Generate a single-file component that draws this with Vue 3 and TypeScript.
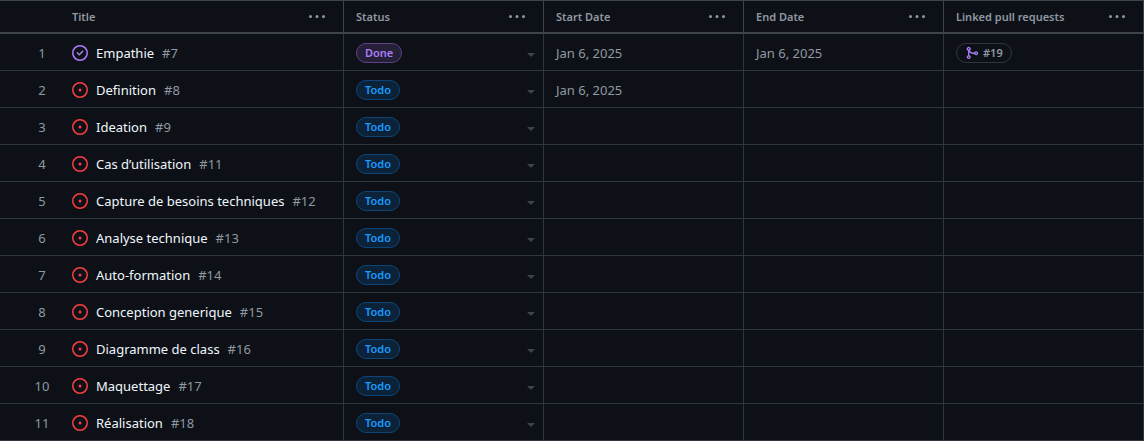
<script setup lang="ts">
interface PullRequest {
  number: number
}

interface Item {
  title: string
  issue: number
  status: 'Todo' | 'Done'
  start?: string
  end?: string
  pull?: PullRequest
}

const columns: string[] = ['Title', 'Status', 'Start Date', 'End Date', 'Linked pull requests']

const items: Item[] = [
  { title: 'Empathie', issue: 7, status: 'Done', start: 'Jan 6, 2025', end: 'Jan 6, 2025', pull: { number: 19 } },
  { title: 'Definition', issue: 8, status: 'Todo', start: 'Jan 6, 2025' },
  { title: 'Ideation', issue: 9, status: 'Todo' },
  { title: 'Cas d’utilisation', issue: 11, status: 'Todo' },
  { title: 'Capture de besoins techniques', issue: 12, status: 'Todo' },
  { title: 'Analyse technique', issue: 13, status: 'Todo' },
  { title: 'Auto-formation', issue: 14, status: 'Todo' },
  { title: 'Conception generique', issue: 15, status: 'Todo' },
  { title: 'Diagramme de class', issue: 16, status: 'Todo' },
  { title: 'Maquettage', issue: 17, status: 'Todo' },
  { title: 'Réalisation', issue: 18, status: 'Todo' },
]
</script>

<template>
  <table class="grid">
    <colgroup>
      <col class="col-index" />
      <col />
      <col class="col-field" span="4" />
    </colgroup>
    <thead>
      <tr>
        <th
          v-for="(name, i) in columns"
          :key="name"
          scope="col"
          :colspan="i === 0 ? 2 : 1"
          :class="{ 'title-head': i === 0 }"
        >
          <div class="head">
            <span>{{ name }}</span>
            <button type="button" class="icon-button" :aria-label="`${name} column options`">
              <svg width="16" height="16" viewBox="0 0 16 16" aria-hidden="true">
                <path d="M8 9a1.5 1.5 0 1 0 0-3 1.5 1.5 0 0 0 0 3ZM1.5 9a1.5 1.5 0 1 0 0-3 1.5 1.5 0 0 0 0 3Zm13 0a1.5 1.5 0 1 0 0-3 1.5 1.5 0 0 0 0 3Z" />
              </svg>
            </button>
          </div>
        </th>
      </tr>
    </thead>
    <tbody>
      <tr v-for="(item, i) in items" :key="item.issue">
        <td class="index">{{ i + 1 }}</td>
        <td>
          <div class="title">
            <svg v-if="item.status === 'Done'" class="closed" width="16" height="16" viewBox="0 0 16 16" aria-hidden="true">
              <path d="M11.28 6.78a.75.75 0 0 0-1.06-1.06L7.25 8.69 5.78 7.22a.75.75 0 0 0-1.06 1.06l2 2a.75.75 0 0 0 1.06 0l3.5-3.5Z" />
              <path d="M16 8A8 8 0 1 1 0 8a8 8 0 0 1 16 0Zm-1.5 0a6.5 6.5 0 1 0-13 0 6.5 6.5 0 0 0 13 0Z" />
            </svg>
            <svg v-else class="open" width="16" height="16" viewBox="0 0 16 16" aria-hidden="true">
              <path d="M8 9.5a1.5 1.5 0 1 0 0-3 1.5 1.5 0 0 0 0 3Z" />
              <path d="M8 0a8 8 0 1 1 0 16A8 8 0 0 1 8 0ZM1.5 8a6.5 6.5 0 1 0 13 0 6.5 6.5 0 0 0-13 0Z" />
            </svg>
            <a :href="`#issue-${item.issue}`">{{ item.title }}</a>
            <span class="number">#{{ item.issue }}</span>
          </div>
        </td>
        <td class="field">
          <div class="status">
            <span class="pill" :class="item.status.toLowerCase()">{{ item.status }}</span>
            <button type="button" class="icon-button caret" :aria-label="`Change status of ${item.title}`">
              <svg width="16" height="16" viewBox="0 0 16 16" aria-hidden="true">
                <path d="m4.427 7.427 3.396 3.396a.25.25 0 0 0 .354 0l3.396-3.396A.25.25 0 0 0 11.396 7H4.604a.25.25 0 0 0-.177.427Z" />
              </svg>
            </button>
          </div>
        </td>
        <td class="field">{{ item.start }}</td>
        <td class="field">{{ item.end }}</td>
        <td class="field">
          <a v-if="item.pull" class="pill pull" :href="`#pull-${item.pull.number}`">
            <svg width="14" height="14" viewBox="0 0 16 16" aria-hidden="true">
              <path d="M5.45 5.154A4.25 4.25 0 0 0 9.25 7.5h1.378a2.251 2.251 0 1 1 0 1.5H9.25A5.734 5.734 0 0 1 5 7.123v3.505a2.25 2.25 0 1 1-1.5 0V5.372a2.25 2.25 0 1 1 1.95-.218ZM4.25 13.5a.75.75 0 1 0 0-1.5.75.75 0 0 0 0 1.5Zm8.5-4.5a.75.75 0 1 0 0-1.5.75.75 0 0 0 0 1.5ZM5 3.25a.75.75 0 1 0 0 .005V3.25Z" />
            </svg>
            #{{ item.pull.number }}
          </a>
        </td>
      </tr>
    </tbody>
  </table>
</template>

<style>
body {
  margin: 0;
  background: #0d1117;
}
</style>

<style scoped>
.grid {
  width: 100%;
  table-layout: fixed;
  border-collapse: separate;
  border-spacing: 0;
  border-top: 1px solid #3d444d;
  color: #9198a1;
  font: 400 13px/20px "Noto Sans", sans-serif;
}

.col-index {
  width: 60px;
}

.col-field {
  width: 200px;
}

th {
  padding: 0 18px 0 12px;
  border-right: 1px solid #3d444d;
  border-bottom: 2px solid #3d444d;
  font-size: 11px;
  font-weight: 600;
  text-align: left;
}

.title-head {
  padding-left: 72px;
}

.head {
  display: flex;
  align-items: center;
  justify-content: space-between;
  height: 31px;
  white-space: nowrap;
}

td {
  padding: 9px 12px 7px;
  border-right: 1px solid #30363d;
  border-bottom: 1px solid #30363d;
  white-space: nowrap;
}

.index {
  padding-right: 0;
  padding-left: 24px;
  border-right: 0;
  text-align: center;
}

.title {
  display: flex;
  align-items: center;
  gap: 8px;
}

.title a {
  color: #f0f6fc;
  text-decoration: none;
}

.number {
  color: #9198a1;
}

svg {
  display: block;
  flex: none;
  fill: currentColor;
}

.closed {
  color: #ab7df8;
}

.open {
  color: #f93e3e;
}

.field {
  padding-right: 4px;
}

.status {
  display: flex;
  align-items: center;
  justify-content: space-between;
}

.pill {
  display: inline-flex;
  align-items: center;
  box-sizing: border-box;
  height: 20px;
  padding: 0 8px;
  border: 1px solid;
  border-radius: 10px;
  font-size: 11px;
  font-weight: 600;
  line-height: 18px;
  vertical-align: top;
}

.done {
  border-color: #5e4288;
  background: #251f38;
  color: #ab7df8;
}

.todo {
  border-color: #0c4679;
  background: #0b2238;
  color: #1a9bff;
}

.pull {
  gap: 4px;
  border-color: #30363d;
  color: #9198a1;
  text-decoration: none;
}

.pull svg {
  color: #ab7df8;
}

.icon-button {
  padding: 0;
  border: 0;
  background: none;
  color: #9198a1;
  cursor: pointer;
}

.caret {
  padding-top: 2px;
  color: #3d444d;
}
</style>
